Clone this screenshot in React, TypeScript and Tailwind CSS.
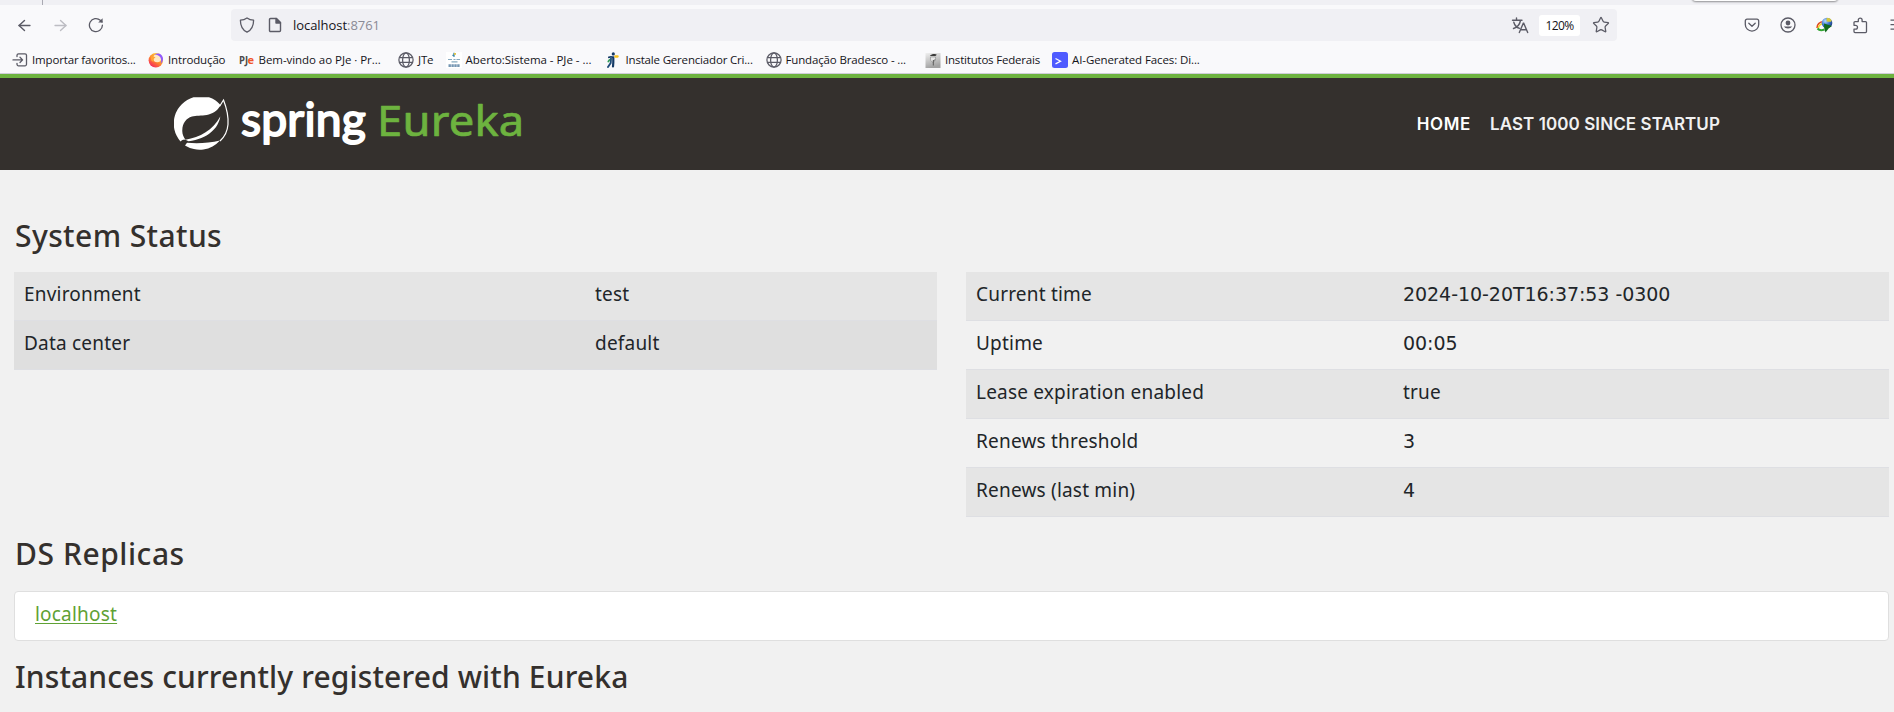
import React from "react";
import { ArrowLeft, ArrowRight, Star } from "lucide-react";

const ui = "font-['Open_Sans','Noto_Sans',sans-serif]";

function Globe() {
  return (
    <svg width="16" height="16" viewBox="0 0 16 16" fill="none" stroke="#5b5b66" strokeWidth="1.25">
      <circle cx="8" cy="8" r="7.1" />
      <ellipse cx="8" cy="8" rx="3.4" ry="7.1" />
      <path d="M1.4 5.7h13.2M1.4 10.3h13.2" />
    </svg>
  );
}

function ImportIcon() {
  return (
    <svg width="16" height="16" viewBox="0 0 16 16" fill="none" stroke="#5b5b66" strokeWidth="1.3" strokeLinecap="round" strokeLinejoin="round">
      <path d="M5 4.5V3.2A1.5 1.5 0 0 1 6.500 1.800h6.500A1.500 1.500 0 0 1 14.500 3.300v9a1.500 1.500 0 0 1-1.500 1.500H6.500A1.500 1.500 0 0 1 5 12.300V11.300" />
      <path d="M1 7.900h9.500M8 5.300l2.600 2.600L8 10.500" />
    </svg>
  );
}

function FirefoxIcon() {
  return (
    <svg width="16" height="16" viewBox="0 0 16 16">
      <defs>
        <linearGradient id="fx" x1="0.8" y1="0.1" x2="0.2" y2="0.95">
          <stop offset="0" stopColor="#ffd23d" />
          <stop offset="0.5" stopColor="#ff8a2b" />
          <stop offset="1" stopColor="#f5255f" />
        </linearGradient>
      </defs>
      <circle cx="7.800" cy="8.300" r="7.200" fill="url(#fx)" />
      <circle cx="9.200" cy="6.300" r="4" fill="#ffe9c4" />
      <path d="M6.500 2.400C10 0 15 2 15 7c0 2.500-1.500 4-2.400 4.500 1.200-2.500.8-6.500-2.400-8C9 2.800 7.800 2.300 6.500 2.400z" fill="#9059ff" />
      <path d="M3.500 4c1.500 0 3 .8 4 1.700-2 .5-2.500 2-1.500 3.800-2 .5-4-1.500-2.500-5.500z" fill="#ffa436" />
    </svg>
  );
}

function PjeIcon() {
  return (
    <svg width="16" height="16" viewBox="0 0 16 16" fontFamily="Open Sans, sans-serif" fontWeight="700" fontSize="10">
      <text x="0" y="11.500" fill="#4a4a4a" textLength="9" lengthAdjust="spacingAndGlyphs">PJ</text>
      <text x="8.500" y="11.500" fill="#f0562a" textLength="6.500" lengthAdjust="spacingAndGlyphs" fontSize="11">e</text>
    </svg>
  );
}

function CourtIcon() {
  return (
    <svg width="16" height="16" viewBox="0 0 16 16">
      <rect width="16" height="16" fill="#fff" />
      <path d="M8 0.800v4M6.500 3l2 1.500" stroke="#3f88a8" strokeWidth="1.400" />
      <rect x="8" y="1" width="2" height="1.800" fill="#e0c34a" />
      <path d="M2 7.500h4M7.500 7.500h2M10.500 7.500H14M5.500 9.800h6" stroke="#86a9bf" strokeWidth="1.200" />
      <path d="M2.500 13.700h11.500" stroke="#7596b3" strokeWidth="2.800" strokeDasharray="2.400 0.500" />
    </svg>
  );
}

function RunnerIcon() {
  return (
    <svg width="16" height="16" viewBox="0 0 16 16" fill="none" strokeLinecap="round">
      <circle cx="7.300" cy="1.900" r="1.600" fill="#153a66" />
      <path d="M2.800 5.400L5 4.800l2.300.6" stroke="#153a66" strokeWidth="1.700" />
      <path d="M7.300 5.500v5L7 14.500" stroke="#153a66" strokeWidth="2.200" />
      <path d="M5 6.500l-.3 4.500-2.700 4" stroke="#1f4c7a" strokeWidth="1.900" />
      <path d="M3.600 7.800l-1.300 1.700" stroke="#2f9b57" strokeWidth="1.700" />
      <path d="M9.300 4.500h2.300" stroke="#f7c21e" strokeWidth="2.300" />
    </svg>
  );
}

function CrestIcon() {
  return (
    <svg width="16" height="16" viewBox="0 0 16 16">
      <defs>
        <linearGradient id="crest" x1="0" y1="0" x2="0.300" y2="1">
          <stop offset="0" stopColor="#f0f0f0" />
          <stop offset="1" stopColor="#a2a2a2" />
        </linearGradient>
      </defs>
      <rect x="0.500" y="1" width="15" height="15" fill="url(#crest)" />
      <path d="M5 3.600c1.500-1.800 5.500-2.200 6.800-.8l-1.300 1.200H5.500z" fill="#3b3b3b" />
      <path d="M5.500 5c-.5 3 .8 5 2.500 5.500C10 10 11 7.500 10.500 5z" fill="#e8e8e8" stroke="#888" strokeWidth="0.600" />
      <path d="M8.300 8v5.500M8.300 9.500l1.500-2" stroke="#5c5c5c" strokeWidth="1" />
    </svg>
  );
}

function PromptIcon() {
  return (
    <svg width="16" height="16" viewBox="0 0 16 16" fill="none">
      <rect width="16" height="16" rx="2.500" fill="#4f5bff" />
      <path d="M3.500 6.500l5 2.700-5 2.700" stroke="#fff" strokeWidth="1.300" />
    </svg>
  );
}

function Bookmark({ icon, label, className }: { icon: React.ReactNode; label: string; className: string }) {
  return (
    <div className={"flex shrink-0 items-center gap-1 whitespace-nowrap " + className}>
      <span className="w-4 shrink-0">{icon}</span>
      <span>{label}</span>
    </div>
  );
}

function BrowserChrome() {
  return (
    <div className={"h-[74px] border-b border-[#cfcfd8] bg-[#f9f9fb] text-[#15141a] " + ui}>
      <div className="relative h-[5px] bg-[#f0f0f4] pl-[42px]">
        <div className="h-[5px] w-px bg-[#a9a9b2]" />
        <div className="absolute top-[-6px] left-[1692px] h-[7px] w-[146px] rounded-b bg-white shadow-[0_1px_2px_rgba(0,0,0,0.4)]" />
      </div>
      <div className="flex h-10 items-center pl-4">
        <ArrowLeft size={17} strokeWidth={1.800} color="#5b5b66" className="scale-x-110" />
        <ArrowRight size={17} strokeWidth={1.800} color="#bdbdc3" className="ml-[19px] scale-x-110" />
        <svg className="ml-[19px]" width="16" height="16" viewBox="0 0 16 16" fill="none" stroke="#5b5b66" strokeWidth="1.300" strokeLinecap="round">
          <path d="M14.400 8.200A6.500 6.500 0 1 1 12.300 3.300L14 5" />
          <path d="M14.600 1.200v4.400h-4.400z" fill="#5b5b66" stroke="none" />
        </svg>
        <div className="ml-[127px] flex h-8 w-[1386px] shrink-0 items-center rounded bg-[#f0f0f4] pl-2">
          <svg width="16" height="16" viewBox="0 0 16 16" fill="none" stroke="#5b5b66" strokeWidth="1.300" strokeLinejoin="round">
            <path d="M8 0.900c2 1.500 4.300 2.200 6.600 2.300 0 5.300-1.900 9.700-6.600 12-4.700-2.300-6.600-6.700-6.600-12C3.700 3.100 6 2.400 8 .9z" />
          </svg>
          <svg className="ml-3" width="16" height="16" viewBox="0 0 16 16" fill="none" stroke="#5b5b66" strokeWidth="1.400" strokeLinejoin="round">
            <path d="M3.500 1.500h6l4 4v8a1 1 0 0 1-1 1h-9a1 1 0 0 1-1-1v-11a1 1 0 0 1 1-1z" />
            <path d="M9 1.500v4.500h4.500z" fill="#5b5b66" />
          </svg>
          <span className="ml-[10px] w-[90px] pt-[2px] text-[13px] tracking-[-0.05px] whitespace-nowrap">
            localhost<span className="text-[#8a8a94]">:8761</span>
          </span>
          <svg className="ml-[1128px] shrink-0" width="18" height="17" viewBox="0 0 18 17" fill="none" stroke="#5b5b66" strokeWidth="1.400" strokeLinecap="round">
            <path d="M1.500 3.200h9.500M5.500 1v2M2.800 5.200c.8 3 3 5.300 5.700 6.200M9.500 3.500c-.8 4-3.500 7-7 8" />
            <path d="M8.300 15.500l4-9.200h.4l4 9.200M9.700 12.800h5.600" />
          </svg>
          <span className="ml-[10px] flex h-[21px] w-[41px] shrink-0 items-center justify-center rounded-[3px] bg-white pt-px text-[12px] tracking-[-0.65px]">120%</span>
          <Star size={18} strokeWidth={1.700} color="#5b5b66" className="ml-[12px] shrink-0" />
        </div>
        <svg className="ml-[127px] shrink-0" width="16" height="16" viewBox="0 0 16 16" fill="none" stroke="#5b5b66" strokeWidth="1.300" strokeLinecap="round" strokeLinejoin="round">
          <path d="M3 2.200h10a1.700 1.700 0 0 1 1.700 1.700v3.500a6.700 6.700 0 0 1-13.400 0V3.900A1.700 1.700 0 0 1 3 2.200z" />
          <path d="M4.800 6.200L8 9.300l3.200-3.100" />
        </svg>
        <svg className="ml-5 shrink-0" width="16" height="16" viewBox="0 0 16 16" fill="#5b5b66">
          <circle cx="8" cy="8" r="7" fill="none" stroke="#5b5b66" strokeWidth="1.300" />
          <circle cx="8" cy="6" r="2.400" />
          <path d="M3.800 9.500h8.400a4.600 3.400 0 0 1-8.400 0z" />
        </svg>
        <svg className="ml-5 shrink-0" width="17" height="16" viewBox="0 0 17 16" fill="none">
          <defs>
            <radialGradient id="ball" cx="0.350" cy="0.300" r="0.800">
              <stop offset="0" stopColor="#b9dcff" />
              <stop offset="0.500" stopColor="#3f78cf" />
              <stop offset="1" stopColor="#12306e" />
            </radialGradient>
          </defs>
          <path d="M1 11C1 7.500 3.500 5 8 4.500" stroke="#e04a20" strokeWidth="1.500" />
          <path d="M2.300 11.500C2.500 9 4.500 6.800 8 6.300" stroke="#f3d321" strokeWidth="1.500" />
          <path d="M1.500 11.500c2 2.300 4.500 2 7 1" stroke="#32a532" strokeWidth="2" />
          <circle cx="11" cy="6" r="5.300" fill="url(#ball)" />
          <path d="M10.500 1.500c2-1 4.500 0 5.200 2.500-1.500 1.500-3 .5-5 .5z" fill="#d5c93a" />
          <path d="M8 6.500l8 2.500-3 2-3.500 4.500-1.200-4z" fill="#126a1c" />
        </svg>
        <svg className="ml-[19px] shrink-0" width="17" height="17" viewBox="0 0 17 17" fill="none" stroke="#5b5b66" strokeWidth="1.300" strokeLinejoin="round">
          <path d="M3 4.600h3.300V3a1.900 1.900 0 0 1 3.800 0v1.600h3.400a1 1 0 0 1 1 1v9a1 1 0 0 1-1 1H3a1 1 0 0 1-1-1v-2.500h1.600a1.900 1.900 0 0 0 0-3.800H2V5.600a1 1 0 0 1 1-1z" />
        </svg>
        <svg className="ml-[21px] shrink-0" width="4" height="12" viewBox="0 0 4 12" fill="#5b5b66">
          <path d="M0.500 0.500h3.500v1.300H0.500zM0.500 5h3.500v1.300H0.500zM0.500 9.500h3.500v1.300H0.500z" />
        </svg>
      </div>
      <div className="flex h-[29px] items-center pl-3 text-[11.5px] tracking-[-0.15px]">
        <Bookmark className="w-[136px]" icon={<ImportIcon />} label="Importar favoritos..." />
        <Bookmark className="w-[90.5px]" icon={<FirefoxIcon />} label="Introdução" />
        <Bookmark className="w-[159.5px] tracking-[-0.05px]" icon={<PjeIcon />} label="Bem-vindo ao PJe · Pr..." />
        <Bookmark className="w-[47.5px]" icon={<Globe />} label="JTe" />
        <Bookmark className="w-[160px] tracking-[-0.03px]" icon={<CourtIcon />} label="Aberto:Sistema - PJe - ..." />
        <Bookmark className="w-[160px] tracking-[-0.18px]" icon={<RunnerIcon />} label="Instale Gerenciador Cri..." />
        <Bookmark className="w-[159.5px]" icon={<Globe />} label="Fundação Bradesco - ..." />
        <Bookmark className="w-[127px] tracking-[-0.2px]" icon={<CrestIcon />} label="Institutos Federais" />
        <Bookmark className="w-[160px] tracking-[-0.1px]" icon={<PromptIcon />} label="AI-Generated Faces: Di..." />
      </div>
    </div>
  );
}

function Logo() {
  return (
    <svg width="360" height="82" viewBox="0 -10 360 82" role="img" aria-label="Spring Eureka">
      <path
        fill="#fff"
        d="M46.500 8A27.300 27.300 0 0 0 35 0.300H19.500A27.300 27.300 0 0 0 6.500 44.500c1.500-2 3.500-2 5.200-1.500C9.500 40 8 37 8.300 33 8.500 26 12 21.500 18 19.500c8-2 22 1.500 28.500-11.500z"
      />
      <path
        fill="#fff"
        d="M11.500 42.700C26 40.500 39 33 46.300 19.500 44.500 31 34 42 14.500 44.200z"
      />
      <path fill="#fff" d="M13 45.800c10 .8 22 .5 33-2.300A27.300 27.300 0 0 1 11 48.500z" />
      <path d="M45.500 9.500l4-6.500C53 12 54.500 20 54 27.500c-.6 7-3.500 12.500-8 16.500" fill="none" stroke="#fff" strokeWidth="1.200" />
      <circle cx="10.200" cy="44.800" r="2" fill="#34302d" />
      <text x="67" y="38.500" fill="#fff" stroke="#fff" strokeWidth="1.900" strokeLinejoin="round" fontFamily="Lato, sans-serif" fontWeight="400" fontSize="47" textLength="125" lengthAdjust="spacingAndGlyphs">spring</text>
      <text x="203" y="39" fill="#6db33f" stroke="#6db33f" strokeWidth="0.700" strokeLinejoin="round" fontFamily="Noto Sans, sans-serif" fontSize="42" textLength="147.500" lengthAdjust="spacingAndGlyphs">Eureka</text>
    </svg>
  );
}

function Row({ name, value, shade, nameWidth, valueClass }: { name: string; value: string; shade: string; nameWidth: string; valueClass?: string }) {
  return (
    <div className={"flex h-[49px] border-b border-[#dedfe3] px-[10px] pt-2 leading-7 " + shade}>
      <span className={nameWidth}>{name}</span>
      <span className={valueClass}>{value}</span>
    </div>
  );
}

const digits = "font-['DejaVu_Sans',sans-serif] tracking-[-0.05px]";

export default function App() {
  return (
    <div className="h-[712px] w-[1894px] overflow-hidden bg-[#f1f1f1] font-['Noto_Sans',sans-serif] text-[19px] tracking-[0.2px] text-[#212529]">
      <BrowserChrome />
      <header className="flex h-24 items-start justify-between border-t-4 border-[#6db33f] bg-[#34302d] pl-[174px]">
        <div className="pt-[9px]">
          <Logo />
        </div>
        <nav className="flex gap-[19px] pt-[34px] pr-[174px] font-['Inter',sans-serif] text-[17px] leading-6 font-semibold tracking-[0.08px] text-[#f1f1f1]">
          <a className="tracking-[0.6px] text-white">HOME</a>
          <a>LAST 1000 SINCE STARTUP</a>
        </nav>
      </header>

      <main className="pt-12 pr-[5px] pl-[14px]">
        <h1 className="pl-px text-[30px] leading-9 font-medium tracking-[0.4px] text-[#34302d]">System Status</h1>
        <div className="mt-[18px] flex items-start gap-[29px]">
          <div className="w-[923px]">
            <Row name="Environment" value="test" shade="bg-[#e5e5e5]" nameWidth="w-[571px]" />
            <Row name="Data center" value="default" shade="bg-[#dfdfdf]" nameWidth="w-[571px]" />
          </div>
          <div className="w-[923px]">
            <Row name="Current time" value="2024-10-20T16:37:53 -0300" shade="bg-[#e5e5e5]" nameWidth="w-[427px]" valueClass={digits} />
            <Row name="Uptime" value="00:05" shade="bg-[#f1f1f1]" nameWidth="w-[427px]" valueClass={digits} />
            <Row name="Lease expiration enabled" value="true" shade="bg-[#e5e5e5]" nameWidth="w-[427px]" />
            <Row name="Renews threshold" value="3" shade="bg-[#f1f1f1]" nameWidth="w-[427px]" valueClass={digits} />
            <Row name="Renews (last min)" value="4" shade="bg-[#e5e5e5]" nameWidth="w-[427px]" valueClass={digits} />
          </div>
        </div>
        <h1 className="mt-[19px] pl-px text-[30px] leading-9 font-medium tracking-[0.55px] text-[#34302d]">DS Replicas</h1>
        <div className="mt-[19px] h-[50px] rounded border border-[#dfdfdf] bg-white px-5 pt-2 leading-7">
          <a className="text-[#5fa134] underline underline-offset-2">localhost</a>
        </div>
        <h1 className="mt-[18px] pl-px text-[30px] leading-9 font-medium tracking-[0.14px] text-[#34302d]">Instances currently registered with Eureka</h1>
      </main>
    </div>
  );
}
